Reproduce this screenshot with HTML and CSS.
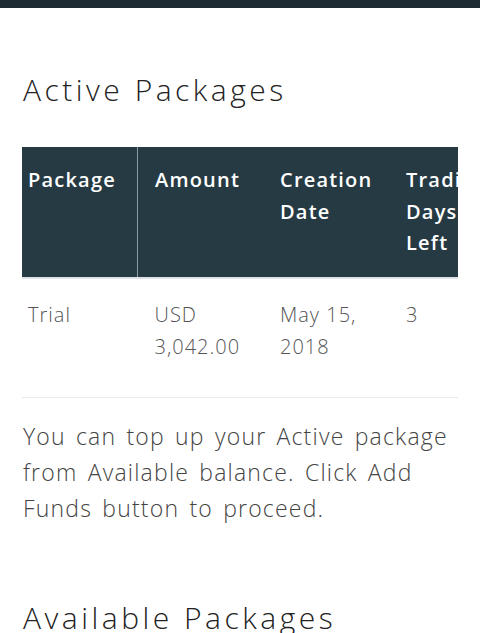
FILE: index.html
```html
<!DOCTYPE html>
<html>
<head>
<meta charset="utf-8">
<link rel="stylesheet" href="styles.css">
</head>
<body>
<div class="topbar"></div>
<main class="content">
  <h2 class="section-title">Active Packages</h2>
  <div class="table-wrap">
    <table class="pkg-table">
      <thead>
        <tr>
          <th class="c1">Package</th>
          <th class="c2">Amount</th>
          <th class="c3">Creation Date</th>
          <th class="c4">Trading Days Left</th>
          <th class="c5">Status</th>
        </tr>
      </thead>
      <tbody>
        <tr>
          <td class="c1">Trial</td>
          <td class="c2">USD 3,042.00</td>
          <td class="c3">May 15, 2018</td>
          <td class="c4">3</td>
          <td class="c5">Active</td>
        </tr>
      </tbody>
    </table>
  </div>
  <p class="note">You can top up your Active package from Available balance. Click Add Funds button to proceed.</p>
  <h2 class="section-title second">Available Packages</h2>
</main>
</body>
</html>
```
FILE: styles.css
```css
html, body {
  margin: 0;
  padding: 0;
  background: #ffffff;
}
body {
  font-family: "Open Sans", "DejaVu Sans", sans-serif;
  color: #333;
  overflow: hidden;
}
.topbar {
  height: 8px;
  background: #1f2b33;
}
.content {
  padding: 0 22px;
}
.section-title {
  font-weight: 300;
  font-size: 30px;
  line-height: 36px;
  letter-spacing: 3.5px;
  color: #222;
  margin: 0;
  padding: 64px 0 0 1px;
  white-space: nowrap;
}
.section-title.second {
  padding-top: 74px;
}
.table-wrap {
  margin-top: 39px;
  width: 436px;
  overflow: hidden;
}
.pkg-table {
  border-collapse: collapse;
  table-layout: fixed;
  width: 578px;
}
.pkg-table th {
  background: #263a44;
  color: #ffffff;
  font-weight: 600;
  font-size: 20px;
  line-height: 31.5px;
  letter-spacing: 1.2px;
  text-align: left;
  vertical-align: top;
  padding: 17px 6px 18px;
  border-bottom: 2px solid #dee2e6;
}
.pkg-table td {
  color: #555;
  font-weight: 300;
  font-size: 20px;
  line-height: 32px;
  letter-spacing: 1px;
  vertical-align: top;
  padding: 20px 6px 34px;
  border-bottom: 1px solid #e9ecef;
}
.pkg-table th.c1 {
  border-right: 1px solid #8a9aa3;
}
.pkg-table .c1 {
  width: 103px;
}
.pkg-table td.c1 {
  padding-right: 7px;
}
.pkg-table .c2 {
  width: 113px;
  padding-left: 17px;
}
.pkg-table .c3 {
  width: 114px;
}
.pkg-table .c4 {
  width: 88px;
}
.pkg-table .c5 {
  width: 88px;
}
.note {
  margin: 20px 0 0 1px;
  font-size: 23px;
  line-height: 36px;
  font-weight: 300;
  letter-spacing: 1.2px;
  word-spacing: 3px;
  color: #444;
}
```
